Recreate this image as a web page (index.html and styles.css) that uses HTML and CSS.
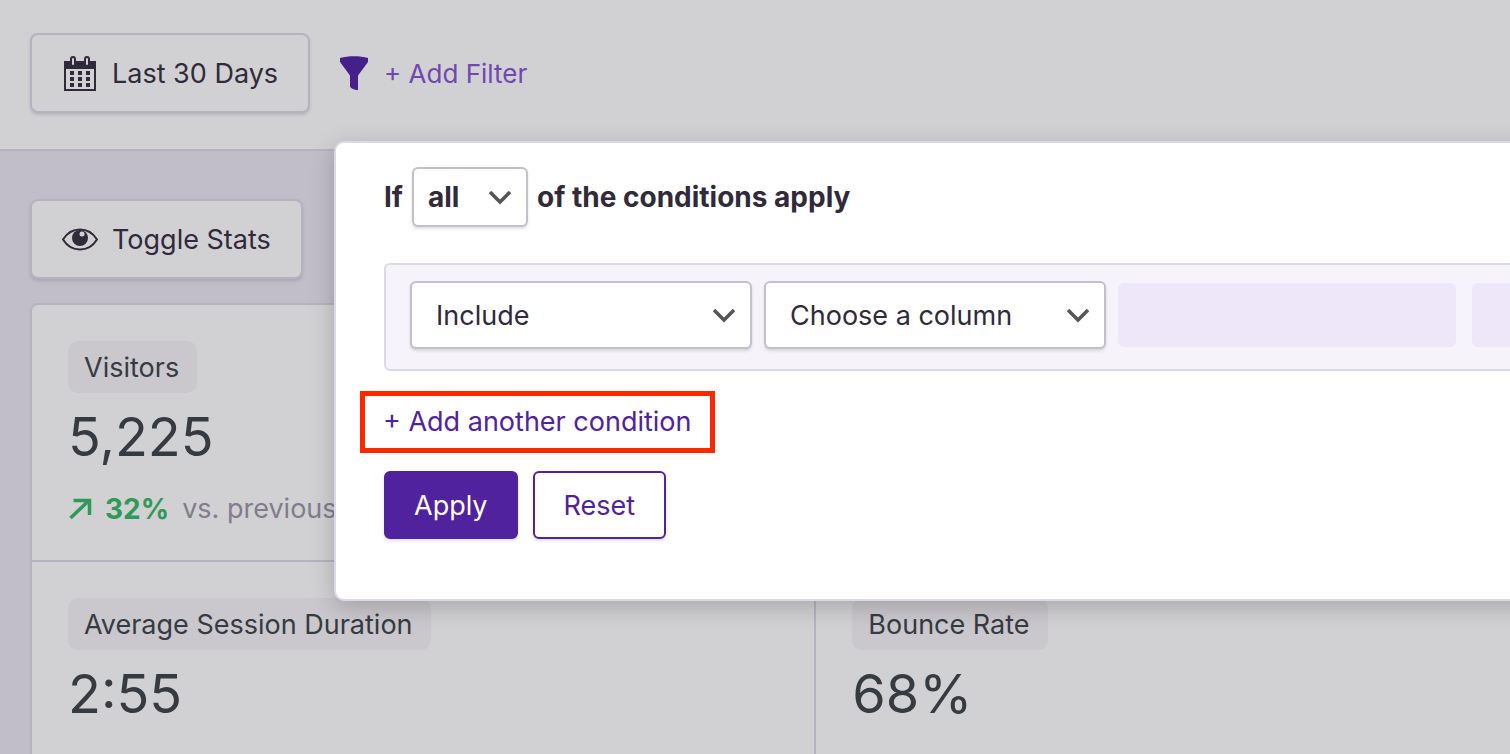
FILE: index.html
```html
<!DOCTYPE html>
<html lang="en">
<head>
    <meta charset="UTF-8">
    <meta name="viewport" content="width=device-width, initial-scale=1.0">
    <title>Analytics</title>
    <link rel="stylesheet" href="styles.css">
</head>
<body>
    <div class="page">
        <header class="toolbar">
            <button type="button" class="btn-box">
                <svg class="icon" width="36" height="36" viewBox="0 0 36 36">
                    <path fill="#312a3a" fill-rule="evenodd" d="M2 6h32v30H2zM4 14v20h28V14z"/>
                    <g fill="#d1d1d3" stroke="#312a3a" stroke-width="2">
                        <rect x="9" y="2" width="4" height="9" rx="2"/>
                        <rect x="23" y="2" width="4" height="9" rx="2"/>
                    </g>
                    <path fill="#312a3a" d="M8 16h4v4H8zM16 16h4v4h-4zM24 16h4v4h-4zM8 22h4v4H8zM16 22h4v4h-4zM24 22h4v4h-4zM8 28h4v4H8zM16 28h4v4h-4zM24 28h4v4h-4z"/>
                </svg>
                <span>Last 30 Days</span>
            </button>
            <a href="#" class="add-filter">
                <svg width="28" height="34" viewBox="0 0 28 34">
                    <path fill="#46208a" d="M0 2C8-.5 20-.5 28 2v4L18 19.500V34c-4 0-8-2-8-4V19.500L0 6z"/>
                </svg>
                <span>+ Add Filter</span>
            </a>
        </header>

        <main class="content">
            <button type="button" class="btn-box">
                <svg class="icon" width="36" height="36" viewBox="0 0 36 36">
                    <path fill="none" stroke="#312a3a" stroke-width="2" d="M1 18.500C5 12 11 8.500 18 8.500s13 3.500 17 10c-4 6.500-10 10-17 10S5 25 1 18.500z"/>
                    <circle cx="18" cy="17" r="8" fill="#312a3a"/>
                    <circle cx="20" cy="13" r="2.500" fill="#d1d1d3"/>
                </svg>
                <span>Toggle Stats</span>
            </button>

            <div class="stats">
                <section class="stat">
                    <h2 class="stat-label">Visitors</h2>
                    <p class="stat-value">5,225</p>
                    <p class="stat-change">
                        <svg width="24" height="22" viewBox="0 0 24 22">
                            <path fill="none" stroke="#2e9a57" stroke-width="3.500" d="M2.500 20L21 2.500M5.500 2.500h16V17"/>
                        </svg>
                        <strong>32%</strong>
                        <span>vs. previous</span>
                    </p>
                </section>
                <section class="stat"></section>
                <section class="stat">
                    <h2 class="stat-label">Average Session Duration</h2>
                    <p class="stat-value">2:55</p>
                </section>
                <section class="stat">
                    <h2 class="stat-label">Bounce Rate</h2>
                    <p class="stat-value">68%</p>
                </section>
            </div>
        </main>

        <form class="filter-panel">
            <div class="match">
                <label for="match">If</label>
                <div class="select select-small">
                    <select id="match">
                        <option>all</option>
                    </select>
                    <svg width="22" height="14" viewBox="0 0 22 14"><path d="M1 1l10 10L21 1"/></svg>
                </div>
                <span>of the conditions apply</span>
            </div>

            <div class="condition">
                <div class="select">
                    <select aria-label="Include">
                        <option>Include</option>
                    </select>
                    <svg width="22" height="14" viewBox="0 0 22 14"><path d="M1 1l10 10L21 1"/></svg>
                </div>
                <div class="select">
                    <select aria-label="Choose a column">
                        <option>Choose a column</option>
                    </select>
                    <svg width="22" height="14" viewBox="0 0 22 14"><path d="M1 1l10 10L21 1"/></svg>
                </div>
                <div class="placeholder"></div>
                <div class="placeholder"></div>
            </div>

            <a href="#" class="add-condition">+ Add another condition</a>

            <div class="actions">
                <button type="button" class="btn btn-primary">Apply</button>
                <button type="button" class="btn">Reset</button>
            </div>
        </form>
    </div>
</body>
</html>
```
FILE: styles.css
```css
* {
    box-sizing: border-box;
}
body {
    margin: 0;
    font-family: Inter, "Liberation Sans", sans-serif;
    font-size: 27px;
    line-height: 32px;
    color: #312a3a;
    background-color: #c1bec9;
}
a {
    text-decoration: none;
}
button,
select {
    font: inherit;
    color: inherit;
}
.page {
    position: relative;
    height: 100vh;
    overflow: hidden;
}

/* top bar */
.toolbar {
    display: flex;
    align-items: flex-start;
    gap: 30px;
    padding: 33px 30px 36px;
    background-color: #d1d1d3;
    border-bottom: 2px solid #b7b2bf;
}
.btn-box {
    display: inline-flex;
    align-items: center;
    gap: 14px;
    height: 80px;
    padding: 0 30px;
    background-color: #d1d1d3;
    border: 2px solid #b7b2bf;
    border-radius: 8px;
    box-shadow: 0 2px 3px rgba(49, 42, 58, 0.15);
}
.btn-box span,
.add-filter span {
    padding-top: 2px;
}
.add-filter {
    display: flex;
    align-items: center;
    gap: 16px;
    height: 80px;
    font-size: 26px;
    color: #7048b0;
}

/* stats */
.content {
    padding: 48px 0 0 30px;
}
.stats {
    display: grid;
    grid-template-columns: calc(53% + 1px) 53%;
    margin-top: 24px;
    border: 2px solid #b7b2bf;
    border-right: 0;
    border-radius: 8px 0 0 8px;
    background-color: #d1d1d3;
}
.stat {
    height: 257px;
    padding: 36px;
    border-bottom: 2px solid #b7b2bf;
}
.stat:nth-child(odd) {
    border-right: 2px solid #b7b2bf;
}
.stat-label {
    display: inline-block;
    margin: 0;
    padding: 11px 18px 9px 16px;
    font-size: 27px;
    font-weight: 400;
    color: #363b42;
    background-color: #cac7cd;
    border-radius: 10px;
}
.stat-value {
    margin: 12px 0 0;
    font-size: 54px;
    line-height: 64px;
    color: #363b42;
}
.stat-change {
    display: flex;
    align-items: center;
    gap: 13px;
    margin: 24px 0 0;
    color: #827c8c;
}
.stat-change strong {
    font-size: 28px;
    color: #2e9a57;
}

/* filter panel */
.filter-panel {
    position: absolute;
    top: 141px;
    left: 334px;
    right: -120px;
    padding: 24px 0 60px 48px;
    background-color: #fff;
    border: 2px solid #dcd9e6;
    border-radius: 10px;
    box-shadow: 0 6px 24px rgba(0, 0, 0, 0.2);
}
.match {
    display: flex;
    align-items: center;
    gap: 9px;
    font-size: 28px;
    font-weight: 700;
}
.select {
    position: relative;
    width: 342px;
}
.select select {
    display: block;
    appearance: none;
    width: 100%;
    height: 68px;
    padding: 2px 24px 0;
    background-color: #fff;
    border: 2px solid #c3c0ca;
    border-radius: 6px;
    box-shadow: 0 2px 3px rgba(49, 42, 58, 0.15);
}
.select svg {
    position: absolute;
    top: 50%;
    right: 17px;
    margin-top: -6px;
    fill: none;
    stroke: #555;
    stroke-width: 3.5;
    pointer-events: none;
}
.select-small {
    width: 116px;
}
.select-small select {
    height: 60px;
    padding: 0 14px;
}
.condition {
    display: flex;
    align-items: center;
    gap: 12px;
    margin-top: 36px;
    padding: 16px 24px 20px;
    background-color: #f6f4fa;
    border: 2px solid #dcd9e6;
    border-radius: 6px;
}
.condition > * {
    flex-shrink: 0;
}
.placeholder {
    width: 338px;
    height: 64px;
    margin-right: 4px;
    background-color: #eee7f9;
    border-radius: 6px;
}
.add-condition {
    display: inline-block;
    margin: 20px 0 0 -24px;
    padding: 10px 18px;
    border: 5px solid #ff2600;
    color: #51229e;
}
.actions {
    display: flex;
    gap: 15px;
    margin-top: 18px;
}
.btn {
    height: 68px;
    padding: 2px 29px 0;
    color: #51229e;
    background-color: #fff;
    border: 2px solid #51229e;
    border-radius: 6px;
    box-shadow: 0 2px 3px rgba(49, 42, 58, 0.15);
}
.btn-primary {
    padding: 2px 28px 0;
    color: #fff;
    background-color: #51229e;
}
```
